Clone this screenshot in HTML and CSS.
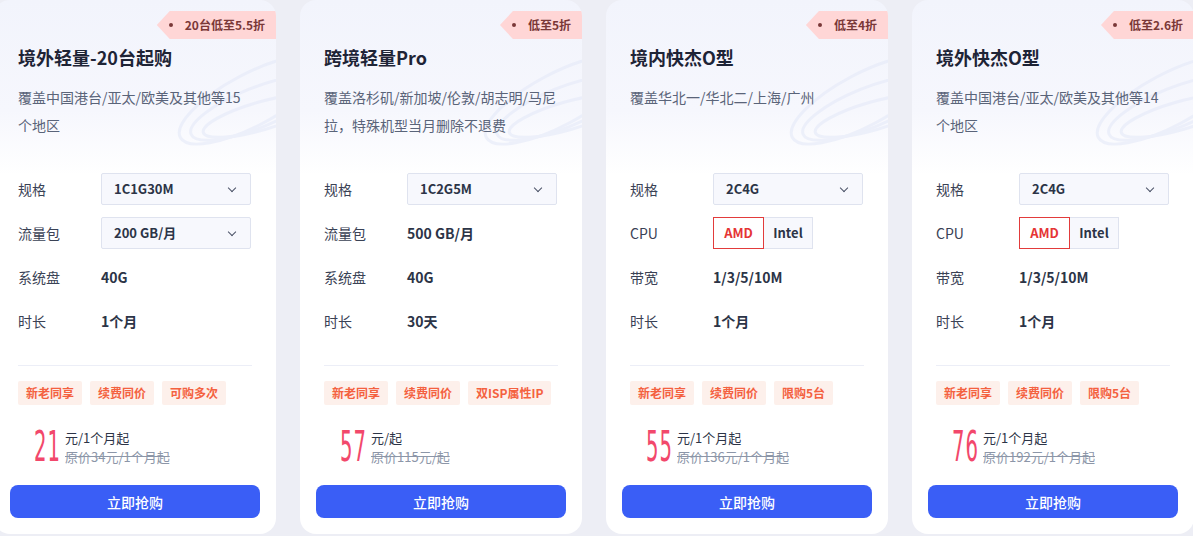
FILE: index.html
```html
<!DOCTYPE html>
<html lang="zh-CN">
<head>
    <meta charset="UTF-8">
    <meta name="viewport" content="width=device-width, initial-scale=1.0">
    <title>套餐</title>
    <link rel="stylesheet" href="styles.css">
</head>
<body>
    <div class="list">

        <div class="card">
            <svg class="swirl" viewBox="0 0 120 140" width="120" height="140">
                <ellipse cx="95" cy="70" rx="80" ry="26" transform="rotate(-28 95 70)" />
                <ellipse cx="100" cy="78" rx="70" ry="20" transform="rotate(-22 100 78)" />
                <ellipse cx="105" cy="86" rx="60" ry="14" transform="rotate(-16 105 86)" />
            </svg>
            <div class="ribbon"><i></i>20台低至5.5折</div>
            <div class="title">境外轻量-20台起购</div>
            <div class="desc">覆盖中国港台/亚太/欧美及其他等15个地区</div>
            <div class="specs">
                <div class="row"><span class="label">规格</span><div class="select">1C1G30M<span class="arrow"></span></div></div>
                <div class="row"><span class="label">流量包</span><div class="select">200 GB/月<span class="arrow"></span></div></div>
                <div class="row"><span class="label">系统盘</span><span class="value">40G</span></div>
                <div class="row"><span class="label">时长</span><span class="value">1个月</span></div>
            </div>
            <div class="line"></div>
            <div class="tags"><span>新老同享</span><span>续费同价</span><span>可购多次</span></div>
            <div class="price">
                <span class="num">21</span>
                <div class="unit">
                    <div>元/1个月起</div>
                    <del>原价34元/1个月起</del>
                </div>
            </div>
            <button class="buy">立即抢购</button>
        </div>

        <div class="card">
            <svg class="swirl" viewBox="0 0 120 140" width="120" height="140">
                <ellipse cx="95" cy="70" rx="80" ry="26" transform="rotate(-28 95 70)" />
                <ellipse cx="100" cy="78" rx="70" ry="20" transform="rotate(-22 100 78)" />
                <ellipse cx="105" cy="86" rx="60" ry="14" transform="rotate(-16 105 86)" />
            </svg>
            <div class="ribbon"><i></i>低至5折</div>
            <div class="title">跨境轻量Pro</div>
            <div class="desc">覆盖洛杉矶/新加坡/伦敦/胡志明/马尼拉，特殊机型当月删除不退费</div>
            <div class="specs">
                <div class="row"><span class="label">规格</span><div class="select">1C2G5M<span class="arrow"></span></div></div>
                <div class="row"><span class="label">流量包</span><span class="value">500 GB/月</span></div>
                <div class="row"><span class="label">系统盘</span><span class="value">40G</span></div>
                <div class="row"><span class="label">时长</span><span class="value">30天</span></div>
            </div>
            <div class="line"></div>
            <div class="tags"><span>新老同享</span><span>续费同价</span><span>双ISP属性IP</span></div>
            <div class="price">
                <span class="num">57</span>
                <div class="unit">
                    <div>元/起</div>
                    <del>原价115元/起</del>
                </div>
            </div>
            <button class="buy">立即抢购</button>
        </div>

        <div class="card">
            <svg class="swirl" viewBox="0 0 120 140" width="120" height="140">
                <ellipse cx="95" cy="70" rx="80" ry="26" transform="rotate(-28 95 70)" />
                <ellipse cx="100" cy="78" rx="70" ry="20" transform="rotate(-22 100 78)" />
                <ellipse cx="105" cy="86" rx="60" ry="14" transform="rotate(-16 105 86)" />
            </svg>
            <div class="ribbon"><i></i>低至4折</div>
            <div class="title">境内快杰O型</div>
            <div class="desc">覆盖华北一/华北二/上海/广州</div>
            <div class="specs">
                <div class="row"><span class="label">规格</span><div class="select">2C4G<span class="arrow"></span></div></div>
                <div class="row"><span class="label">CPU</span><div class="cpu"><span class="on">AMD</span><span>Intel</span></div></div>
                <div class="row"><span class="label">带宽</span><span class="value">1/3/5/10M</span></div>
                <div class="row"><span class="label">时长</span><span class="value">1个月</span></div>
            </div>
            <div class="line"></div>
            <div class="tags"><span>新老同享</span><span>续费同价</span><span>限购5台</span></div>
            <div class="price">
                <span class="num">55</span>
                <div class="unit">
                    <div>元/1个月起</div>
                    <del>原价136元/1个月起</del>
                </div>
            </div>
            <button class="buy">立即抢购</button>
        </div>

        <div class="card">
            <svg class="swirl" viewBox="0 0 120 140" width="120" height="140">
                <ellipse cx="95" cy="70" rx="80" ry="26" transform="rotate(-28 95 70)" />
                <ellipse cx="100" cy="78" rx="70" ry="20" transform="rotate(-22 100 78)" />
                <ellipse cx="105" cy="86" rx="60" ry="14" transform="rotate(-16 105 86)" />
            </svg>
            <div class="ribbon"><i></i>低至2.6折</div>
            <div class="title">境外快杰O型</div>
            <div class="desc">覆盖中国港台/亚太/欧美及其他等14个地区</div>
            <div class="specs">
                <div class="row"><span class="label">规格</span><div class="select">2C4G<span class="arrow"></span></div></div>
                <div class="row"><span class="label">CPU</span><div class="cpu"><span class="on">AMD</span><span>Intel</span></div></div>
                <div class="row"><span class="label">带宽</span><span class="value">1/3/5/10M</span></div>
                <div class="row"><span class="label">时长</span><span class="value">1个月</span></div>
            </div>
            <div class="line"></div>
            <div class="tags"><span>新老同享</span><span>续费同价</span><span>限购5台</span></div>
            <div class="price">
                <span class="num">76</span>
                <div class="unit">
                    <div>元/1个月起</div>
                    <del>原价192元/1个月起</del>
                </div>
            </div>
            <button class="buy">立即抢购</button>
        </div>

    </div>
</body>
</html>
```

FILE: styles.css
```css
* {
    margin: 0;
    padding: 0;
    box-sizing: border-box;
}
body {
    background-color: #edeef5;
    font-family: "Noto Sans CJK SC", "Noto Sans", sans-serif;
    color: #2c3447;
    overflow: hidden;
}
.list {
    display: flex;
    gap: 24px;
    margin-left: -6px;
}
.card {
    position: relative;
    flex: 0 0 282px;
    height: 534px;
    padding: 44px 24px 0;
    border-radius: 16px;
    background: linear-gradient(180deg, #f2f4fc 0, #f6f7fd 110px, #ffffff 175px);
    overflow: hidden;
}
.swirl {
    position: absolute;
    right: 0;
    top: 30px;
    fill: none;
    stroke: #e3e8f8;
    stroke-width: 3;
    opacity: 0.55;
}
.ribbon {
    position: absolute;
    top: 11px;
    right: 0;
    height: 28px;
    padding: 0 11px 0 28px;
    background-color: #ffd6d6;
    clip-path: polygon(0 50%, 13px 0, 100% 0, 100% 100%, 13px 100%);
    color: #7a3838;
    font-size: 12px;
    font-weight: bold;
    line-height: 28px;
}
.ribbon i {
    position: absolute;
    left: 12px;
    top: 12px;
    width: 4px;
    height: 4px;
    border-radius: 50%;
    background-color: #7a3838;
}
.title {
    position: relative;
    font-size: 18px;
    font-weight: bold;
    line-height: 26px;
    color: #1e2436;
}
.desc {
    position: relative;
    margin-top: 13px;
    height: 56px;
    font-size: 14px;
    line-height: 28px;
    color: #5a6479;
}
.specs {
    margin-top: 34px;
    display: flex;
    flex-direction: column;
    gap: 12px;
}
.row {
    display: flex;
    align-items: center;
    height: 32px;
    font-size: 14px;
}
.label {
    width: 83px;
    flex: none;
    color: #3a4255;
}
.value {
    font-weight: bold;
    color: #2c3447;
}
.select {
    position: relative;
    width: 150px;
    height: 32px;
    padding-left: 12px;
    border: 1px solid #dfe3ef;
    border-radius: 2px;
    background-color: #f7f8fd;
    font-size: 13px;
    font-weight: bold;
    line-height: 30px;
    color: #2c3447;
}
.arrow {
    position: absolute;
    right: 15px;
    top: 11px;
    width: 6px;
    height: 6px;
    border-right: 1.3px solid #4a5266;
    border-bottom: 1.3px solid #4a5266;
    transform: rotate(45deg);
}
.cpu {
    display: flex;
}
.cpu span {
    width: 49px;
    height: 32px;
    border: 1px solid #dfe3ef;
    border-left: none;
    background-color: #f7f8fd;
    font-size: 13px;
    font-weight: bold;
    line-height: 30px;
    text-align: center;
    color: #2c3447;
}
.cpu .on {
    width: 51px;
    border: 1px solid #e23b3b;
    background-color: #ffffff;
    color: #e53535;
}
.line {
    margin-top: 28px;
    height: 1px;
    background-color: #eceef7;
}
.tags {
    margin-top: 15px;
    display: flex;
    gap: 8px;
}
.tags span {
    height: 24px;
    padding: 0 8px;
    border-radius: 2px;
    background-color: #fdf0eb;
    color: #f4613f;
    font-size: 12px;
    font-weight: bold;
    line-height: 24px;
}
.price {
    margin-top: 21px;
    display: flex;
    align-items: center;
    height: 42px;
    padding-left: 16px;
}
.num {
    display: inline-block;
    width: 31px;
    font-family: "DejaVu Sans Condensed", "DejaVu Sans", sans-serif;
    font-size: 42px;
    font-weight: normal;
    line-height: 42px;
    color: #f2486b;
    transform: scaleX(0.52);
    transform-origin: left center;
    letter-spacing: 2px;
}
.unit {
    font-size: 13px;
    line-height: 19px;
    color: #2c3447;
}
.unit del {
    display: block;
    color: #8c96a8;
}
.buy {
    display: block;
    margin: 17px -8px 0;
    width: 250px;
    height: 33px;
    border: none;
    border-radius: 8px;
    background-color: #3a5ef6;
    color: #ffffff;
    font-family: "Noto Sans CJK SC", sans-serif;
    font-size: 14px;
    font-weight: 500;
    cursor: pointer;
}
.buy:hover {
    background-color: #2f51e0;
}
```
